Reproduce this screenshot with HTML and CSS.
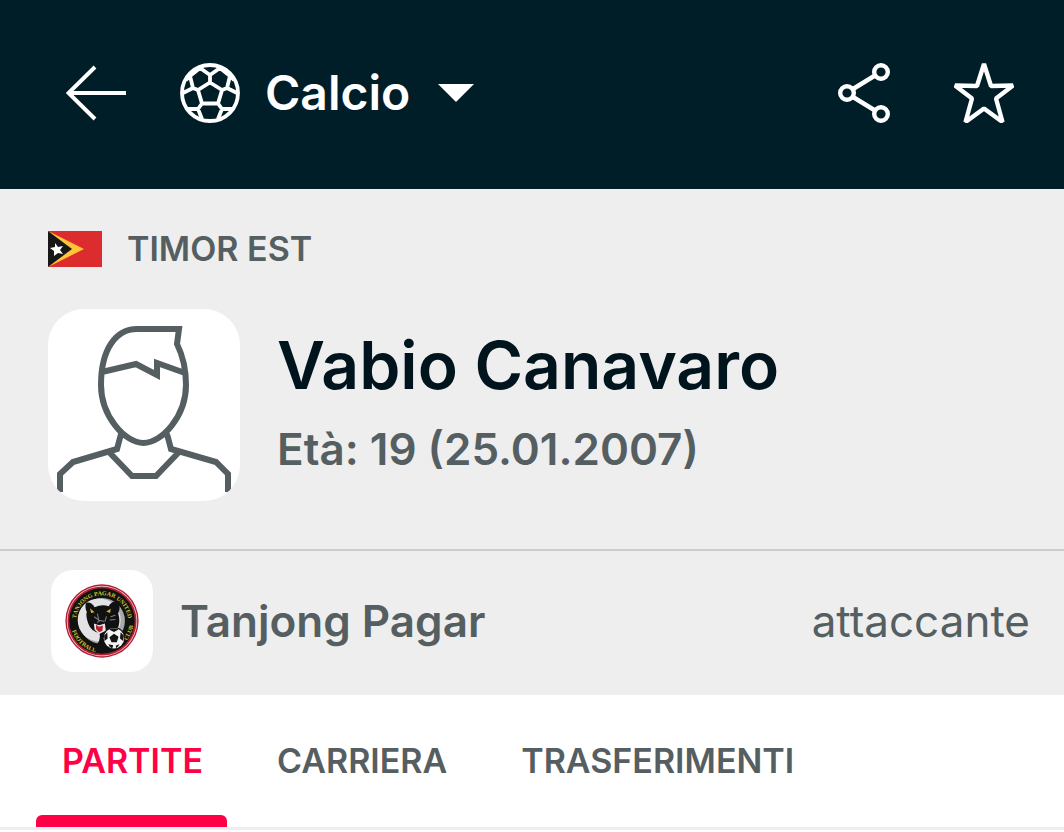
FILE: index.html
```html
<!DOCTYPE html>
<html lang="it">
<head>
<meta charset="utf-8">
<meta name="viewport" content="width=device-width, initial-scale=1">
<title>Vabio Canavaro</title>
<link rel="stylesheet" href="styles.css">
</head>
<body>
<header class="topbar">
  <button class="icon-button" type="button" aria-label="Indietro">
    <svg class="icon" width="60" height="60" viewBox="0 0 60 60"><path d="M29 4 2.500 30 29 56M3 30h57"/></svg>
  </button>
  <label class="sport">
    <svg class="icon" width="60" height="60" viewBox="-30 -30 60 60" role="img" aria-label="Sport">
      <g stroke-width="3.800">
        <circle r="28"/>
        <path d="M0-10.500 12-3 8 10.500H-8L-12-3ZM0-10.500V-18M0-18-10-25M0-18 10-25M-10-25-20-17-17-5-12-3M10-25 20-17 17-5 12-3M-17-5-27 0M17-5 27 0M-20-17-24-13M20-17 24-13M-8 10.500-12 16-8 26M8 10.500 12 16 8 26M-12 16H-23M12 16H23"/>
      </g>
    </svg>
    <span class="sport-picker">
      <select class="sport-select" aria-label="Sport"><option>Calcio</option></select>
      <svg class="caret" width="36" height="18" viewBox="0 0 36 18"><path d="M0 0h36L18 18z"/></svg>
    </span>
  </label>
  <div class="actions">
    <button class="icon-button" type="button" aria-label="Condividi">
      <svg class="icon" width="52" height="60" viewBox="0 0 52 60"><g stroke-width="4.400"><circle cx="9" cy="30" r="6.800"/><circle cx="43" cy="9" r="6.800"/><circle cx="43" cy="51" r="6.800"/><path d="m15 26 22-13.500M15 34l22 13.500"/></g></svg>
    </button>
    <button class="icon-button" type="button" aria-label="Aggiungi ai preferiti">
      <svg class="icon" width="60" height="60" viewBox="0 0 60 60"><path stroke-width="4.400" stroke-linejoin="bevel" d="m30 1 7 22 22-.5-17 13 6.500 23.500L30 45.500 11.500 59 18 35.500 1 22.500l22 .5z"/></svg>
    </button>
  </div>
</header>
<main>
  <section class="player">
    <div class="country">
      <svg width="54" height="36" viewBox="0 0 54 36" aria-hidden="true">
        <path fill="#dd2c2d" d="M0 0h54v36H0z"/><path fill="#ffc43a" d="m0 0 36 18L0 36z"/><path fill="#171717" d="m0 0 24 18L0 36z"/>
        <path fill="#fff" d="m7 12 3 4 5-1-3 4 3 4-5-1-4 3 0-5-4-3 5-1z"/>
      </svg>
      <span>TIMOR EST</span>
    </div>
    <div class="profile">
      <svg class="avatar" width="192" height="192" viewBox="0 0 192 192" role="img" aria-label="Vabio Canavaro">
        <path d="M131 20H89C68 20 53 40 53 76c0 31 24 58 42.500 58S138 107 138 76c0-15-4-31-9-41zM54 63l34-8 21 11V54l28 10M73 125l-4 15-44 13-13 12v18M119 125l4 15 45 13 12 12v18M61 143l23 24h24l23-24"/>
      </svg>
      <div class="identity">
        <h1 class="name">Vabio Canavaro</h1>
        <p class="age">Età: 19 (25.01.2007)</p>
      </div>
    </div>
  </section>
  <section class="club">
    <a class="club-link" href="#club">
      <span class="crest">
        <svg width="74" height="74" viewBox="-105 -105 210 210" role="img" aria-label="Tanjong Pagar United Football Club">
          <defs><path id="arc-top" d="M-68 30A74 74 0 1 1 68 30"/><path id="arc-bottom" d="M-89-10A89 89 0 0 0 20 87"/><path id="arc-right" d="M45 77A89 89 0 0 0 87-20"/></defs>
          <circle r="104" fill="#b51e35"/><circle r="100" fill="#eadfdf"/><circle r="98" fill="#b51e35"/><circle r="93" fill="#111310"/>
          <circle r="65" fill="#a9a9ab"/><circle cx="-8" cy="-3" r="61" fill="#e3e3e5"/>
          <g class="crest-text"><text><textPath href="#arc-top" startOffset="50%" text-anchor="middle">TANJONG PAGAR UNITED</textPath></text><text><textPath href="#arc-bottom" startOffset="50%" text-anchor="middle">FOOTBALL</textPath></text><text><textPath href="#arc-right" startOffset="50%" text-anchor="middle">CLUB</textPath></text></g>
          <path fill="#101110" d="M-45-52q16-3 24 13 20-9 40-3 10-17 25-12 11 12 2 32 8 28-3 45l-12 22 10 24q-25 19-66 7 24-16 18-42-25-5-32-27-8-22-4-33-7-13-2-26"/>
          <path fill="#c5b62d" d="m-34-36 13 11-10 2zM12-27l13-8-2 12z"/>
          <path fill="none" stroke="#808286" stroke-width="3" d="m-22-12 12 9M-13-21l4 19 15 3M13-13 8 2M24-12l14-4M22-3l16-1M-14 4l7-4"/>
          <path fill="#e6e6e6" d="m-23 7 15 5 16-5 3 21-19 9-13-12z"/><path fill="#b52332" d="m-17 10 8 6 12-3-2 15-9 4-9-9z"/>
          <circle cx="34" cy="49" r="32" fill="#111"/><circle cx="34" cy="49" r="29" fill="#f4f4f4"/>
          <path fill="#151515" d="m34 36 13 9-5 15H27l-6-14zM20 24q14-7 27 0l-13 7zM6 42l9-10 1 18-9 7zM62 42l-9-10-2 18 9 7zM18 66l14 3-3 9q-8-3-11-12M49 66l-10 4 1 7q8-4 9-11"/>
        </svg>
      </span>
      <span>Tanjong Pagar</span>
    </a>
    <span class="role">attaccante</span>
  </section>
  <nav class="tabs" aria-label="Sezioni">
    <a class="tab tab-active" href="#partite" aria-current="page">PARTITE</a>
    <a class="tab" href="#carriera">CARRIERA</a>
    <a class="tab" href="#trasferimenti">TRASFERIMENTI</a>
  </nav>
</main>
</body>
</html>
```

FILE: styles.css
```css
* { box-sizing: border-box; }
body { margin: 0; background: #fff; color: #555e61; font-family: Inter, "Liberation Sans", sans-serif; }
svg { display: block; flex: none; }

.topbar { display: flex; align-items: center; padding: 63px 50px 66px 66px; background: #001e28; color: #fff; }
.icon-button { padding: 0; border: 0; background: none; color: inherit; cursor: pointer; }
.icon { fill: none; stroke: currentColor; stroke-width: 4; }
.sport { display: flex; align-items: center; gap: 25px; margin-left: 54px; }
.sport-picker { display: grid; align-items: center; }
.sport-picker > * { grid-area: 1 / 1; }
.sport-select { appearance: none; padding: 0 63px 0 0; border: 0; background: none; color: #fff; font: 600 48px/60px Inter, "Liberation Sans", sans-serif; cursor: pointer; }
.caret { justify-self: end; fill: currentColor; pointer-events: none; }
.actions { display: flex; gap: 64px; margin-left: auto; }

.player { padding: 42px 48px 48px; background: #eee; border-bottom: 2px solid #c8cdcd; }
.country { display: flex; align-items: center; gap: 25px; font-size: 34px; line-height: 36px; font-weight: 600; }
.profile { display: flex; align-items: center; gap: 37px; margin-top: 42px; }
.avatar { border-radius: 36px; background: #fff; fill: none; stroke: #555e61; stroke-width: 6; }
.identity { padding-bottom: 8px; }
.name { margin: 0; color: #00141e; font-size: 66px; line-height: 80px; font-weight: 600; }
.age { margin: 16px 0 0; font-size: 44px; line-height: 56px; font-weight: 600; }

.club { display: flex; align-items: center; justify-content: space-between; padding: 19px 34px 23px 51px; background: #eee; font-size: 44px; line-height: 56px; }
.club-link { display: flex; align-items: center; gap: 27px; color: inherit; font-weight: 600; text-decoration: none; }
.crest { display: grid; place-items: center; width: 102px; height: 102px; border-radius: 22px; background: #fff; }
.crest-text { fill: #d2c52f; font: 700 17px "Liberation Serif", serif; }

.tabs { display: flex; gap: 24px; padding: 0 36px; border-bottom: 3px solid #eee; }
.tab { padding: 46px 24px 46px 26px; color: inherit; font-size: 34px; line-height: 40px; font-weight: 600; text-decoration: none; position: relative; }
.tab-active { color: #ff0046; }
.tab-active::after { content: ""; position: absolute; inset: auto 0 0; height: 12px; border-radius: 6px 6px 0 0; background: #ff0046; }
```
